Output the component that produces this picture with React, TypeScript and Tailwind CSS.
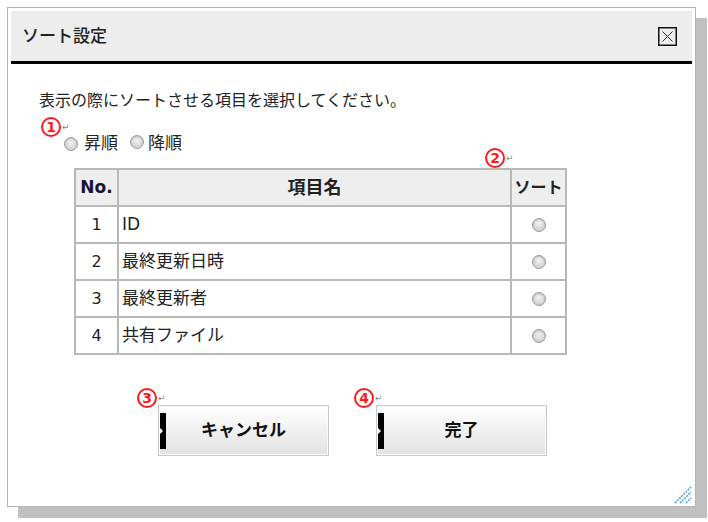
const rows = [
  { no: 1, name: "ID" },
  { no: 2, name: "最終更新日時" },
  { no: 3, name: "最終更新者" },
  { no: 4, name: "共有ファイル" },
];

function Mark({ n }: { n: string }) {
  return (
    <span className="flex items-start">
      <span className="grid size-[20px] place-items-center rounded-full border-2 border-[#ff1a1a] text-[14px] font-bold leading-none text-[#ff1a1a]">
        {n}
      </span>
      <span className="mt-[6px] ml-[1px] text-[9px] leading-none text-[#888]">↵</span>
    </span>
  );
}

function Radio() {
  return (
    <span className="inline-block size-[14px] rounded-full border border-[#9c9c9c] bg-[radial-gradient(circle_at_50%_40%,#f2f2f2_0%,#d8d8d8_55%,#bfbfbf_100%)] shadow-[inset_0_1px_1px_rgba(0,0,0,0.12)]" />
  );
}

function CloseIcon() {
  return (
    <svg width="19" height="19" viewBox="0 0 19 19" aria-hidden="true">
      <rect x="0.75" y="0.75" width="17.5" height="17.5" fill="none" stroke="#111" strokeWidth="1.5" />
      <path d="M4.5 4.5 L14.5 14.5 M14.5 4.5 L4.5 14.5" stroke="#333" strokeWidth="1" />
    </svg>
  );
}

function Bar() {
  return (
    <svg width="7" height="36" viewBox="0 0 7 36" className="absolute left-[1px] top-[7px]" aria-hidden="true">
      <rect x="0" y="0" width="6" height="36" fill="#000" />
      <path d="M0 15 L3 18 L0 21 Z" fill="#fff" />
    </svg>
  );
}

function ActionButton({ label }: { label: string }) {
  return (
    <button
      type="button"
      className="relative h-[51px] w-[171px] border border-[#c8c8c8] bg-gradient-to-b from-white to-[#e2e2e2] text-[17px] font-bold text-[#111] shadow-[inset_0_0_0_1px_#fafafa]"
    >
      <Bar />
      {label}
    </button>
  );
}

export default function App() {
  return (
    <div className="h-[522px] w-[708px] bg-white pl-[7px] pt-[7px] font-['DejaVu_Sans','Noto_Sans_CJK_JP',sans-serif] text-[#222]">
      <div className="relative flex h-[500px] w-[689px] flex-col border border-[#b4b4b4] bg-white p-[3px] shadow-[11px_11px_0_#c0c0c0]">
        <header className="flex h-[53px] items-center justify-between border-b-[3px] border-black bg-[#ededed] pl-[11px] pr-[15px]">
          <h1 className="text-[17px] font-medium leading-none">ソート設定</h1>
          <CloseIcon />
        </header>

        <div className="relative flex-1 pl-[28px] pt-[26px]">
          <p className="text-[16px] leading-[22px]">表示の際にソートさせる項目を選択してください。</p>

          <div className="absolute left-[30px] top-[53px]">
            <Mark n="1" />
          </div>
          <div className="ml-[25px] mt-[21px] flex h-[22px] items-center text-[17px]">
            <Radio />
            <span className="ml-[6px]">昇順</span>
            <span className="ml-[12px]"><Radio /></span>
            <span className="ml-[4px]">降順</span>
          </div>

          <div className="absolute left-[474px] top-[84px]">
            <Mark n="2" />
          </div>
          <table className="ml-[35px] mt-[13px] w-[493px] table-fixed border-collapse">
            <colgroup>
              <col className="w-[43px]" />
              <col />
              <col className="w-[55px]" />
            </colgroup>
            <thead>
              <tr className="h-[37px] bg-[#eeeeee]">
                <th className="border-2 border-[#b8b8b8] text-[17px] font-bold text-[#15153a]">No.</th>
                <th className="border-2 border-[#b8b8b8] text-[18px] font-bold">項目名</th>
                <th className="border-2 border-[#b8b8b8] text-[16px] font-bold">ソート</th>
              </tr>
            </thead>
            <tbody>
              {rows.map((r) => (
                <tr key={r.no} className="h-[37px]">
                  <td className="border-2 border-[#b8b8b8] text-center text-[16px]">{r.no}</td>
                  <td className="border-2 border-[#b8b8b8] pl-[3px] text-[17px]">{r.name}</td>
                  <td className="border-2 border-[#b8b8b8] text-center">
                    <span className="inline-flex translate-y-[2px]"><Radio /></span>
                  </td>
                </tr>
              ))}
            </tbody>
          </table>

          <div className="ml-[119px] mt-[50px] flex gap-[47px]">
            <div className="relative">
              <div className="absolute -left-[21px] -top-[17px]">
                <Mark n="3" />
              </div>
              <ActionButton label="キャンセル" />
            </div>
            <div className="relative">
              <div className="absolute -left-[22px] -top-[17px]">
                <Mark n="4" />
              </div>
              <ActionButton label="完了" />
            </div>
          </div>
        </div>

        <svg width="18" height="18" viewBox="0 0 18 18" className="absolute bottom-[2px] right-[3px]" aria-hidden="true">
          <g stroke="#3a9be0" strokeWidth="1.4" strokeDasharray="2 1">
            <path d="M1 17 L17 1" />
            <path d="M6 17 L17 6" />
            <path d="M12 17 L17 12" />
          </g>
        </svg>
      </div>
    </div>
  );
}
